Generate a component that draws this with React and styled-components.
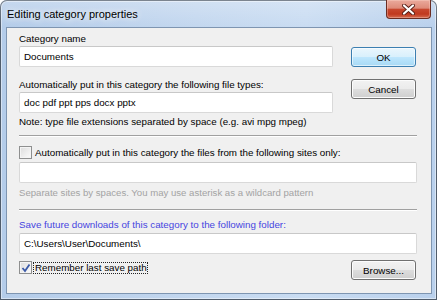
import React from 'react'
import styled, { createGlobalStyle } from 'styled-components'

const GlobalStyle = createGlobalStyle`
  html, body {
    margin: 0;
    padding: 0;
    background: #ffffff;
  }
  body {
    font-family: "Liberation Sans", Arial, sans-serif;
  }
`;

const Window = styled.div`
  width: 437px;
  height: 300px;
  box-sizing: border-box;
  display: flex;
  flex-direction: column;
  border-radius: 7px 7px 0 0;
  background: linear-gradient(90deg, #b4cce9 0%, #c3d7ef 45%, #c9dcf2 70%, #b9d0ec 100%);
  box-shadow: inset 0 0 0 1px #505c6b, inset 0 0 0 2px rgba(255, 255, 255, 0.45);
  overflow: hidden;
`;

const TitleBar = styled.div`
  height: 27px;
  flex: 0 0 27px;
  display: flex;
  align-items: flex-start;
  justify-content: space-between;
  padding-left: 7px;
  background: linear-gradient(180deg, rgba(255, 255, 255, 0.25) 0%, rgba(255, 255, 255, 0) 100%);
`;

const Title = styled.span`
  font-size: 11px;
  line-height: 28px;
  color: #000;
  text-shadow: 0 0 6px rgba(255, 255, 255, 0.95), 0 0 10px rgba(255, 255, 255, 0.7);
`;

const CloseButton = styled.div`
  width: 45px;
  height: 19px;
  box-sizing: border-box;
  margin-right: 6px;
  display: flex;
  align-items: center;
  justify-content: center;
  border: 1px solid #6a2c22;
  border-top: none;
  border-radius: 0 0 4px 4px;
  background: linear-gradient(180deg, #eaaa9c 0%, #de8b79 45%, #c7472e 52%, #c0391f 78%, #d56b50 100%);
  box-shadow: inset 0 0 0 1px rgba(255, 220, 210, 0.35);
`;

const Client = styled.div`
  flex: 1;
  margin: 0 5px 6px 6px;
  border: 1px solid #7e95b1;
  background: #f0f0f0;
  padding: 0 14px 0 12px;
  display: flex;
  flex-direction: column;
  font-size: 9.8px;
  color: #000;
`;

const TopSection = styled.div`
  display: flex;
  align-items: flex-start;
`;

const LeftColumn = styled.div`
  flex: 0 0 314px;
  display: flex;
  flex-direction: column;
`;

const ButtonColumn = styled.div`
  margin-left: auto;
  margin-right: 1px;
  padding-top: 19px;
  display: flex;
  flex-direction: column;
  gap: 12px;
`;

const Label = styled.div`
  line-height: 13px;
  margin-top: ${p => p.$top || 0}px;
  color: ${p => (p.$tone === 'muted' ? '#a3a3a3' : p.$tone === 'accent' ? '#4646e0' : '#000')};
  font-size: ${p => (p.$tone === 'muted' ? '9.6px' : 'inherit')};
  white-space: nowrap;
`;

const TextBox = styled.div`
  height: 21px;
  box-sizing: border-box;
  margin-top: ${p => p.$top || 0}px;
  padding: 0 4px;
  display: flex;
  align-items: center;
  background: #fff;
  border: 1px solid #d9d9d9;
  border-top-color: #c8c8c8;
  border-radius: 2px;
  white-space: nowrap;
`;

const Button = styled.div`
  width: 65px;
  height: 20px;
  box-sizing: border-box;
  display: flex;
  align-items: center;
  justify-content: center;
  border: 1px solid ${p => (p.$primary ? '#3c7fb1' : '#707070')};
  border-radius: 3px;
  background: ${p =>
    p.$primary
      ? 'linear-gradient(180deg, #eaf6fd 0%, #d9f0fc 48%, #bee6fd 52%, #a7d9f5 100%)'
      : 'linear-gradient(180deg, #f2f2f2 0%, #ebebeb 48%, #dddddd 52%, #cfcfcf 100%)'};
  box-shadow: inset 0 0 0 1px ${p => (p.$primary ? 'rgba(255,255,255,0.6)' : '#fcfcfc')};
  color: #000;
`;

const Separator = styled.div`
  margin-top: ${p => p.$top || 0}px;
  height: 0;
  border-top: 1px solid #a0a0a0;
  border-bottom: 1px solid #ffffff;
`;

const CheckRow = styled.div`
  display: flex;
  align-items: center;
  margin-top: ${p => p.$top || 0}px;
  line-height: 11px;
`;

const Box = styled.span`
  width: 13px;
  height: 13px;
  box-sizing: border-box;
  flex: 0 0 13px;
  display: flex;
  align-items: center;
  justify-content: center;
  border: 1px solid #8e8f8f;
  background: linear-gradient(135deg, #dcdcdc 0%, #f2f2f2 70%, #fbfbfb 100%);
  box-shadow: inset 0 0 0 1px #f4f4f4;
`;

const CheckText = styled.span`
  margin-left: 1px;
  padding: 0 0 0 1px;
  border: 1px ${p => (p.$focused ? 'dotted #222' : 'solid transparent')};
  line-height: 10px;
  white-space: nowrap;
`;

const BottomRow = styled.div`
  display: flex;
  align-items: flex-start;
  justify-content: space-between;
  margin-top: 6px;
  padding-right: 1px;
`;

const CloseGlyph = () => (
  <svg width="13" height="11" viewBox="0 0 13 11">
    <path d="M2 1.5 L11 9.5 M11 1.5 L2 9.5" stroke="#5a2018" strokeWidth="4" strokeLinecap="round" />
    <path d="M2 1.5 L11 9.5 M11 1.5 L2 9.5" stroke="#ffffff" strokeWidth="2.2" strokeLinecap="round" />
  </svg>
);

const CheckMark = () => (
  <svg width="10" height="10" viewBox="0 0 10 10">
    <path d="M1.5 5 L4 8 L8.5 1.5" fill="none" stroke="#3b5aa8" strokeWidth="1.8" />
  </svg>
);

const CheckBox = ({ checked, focused, children }) => (
  <>
    <Box>{checked && <CheckMark />}</Box>
    <CheckText $focused={focused}>{children}</CheckText>
  </>
);

export default function App() {
  return (
    <>
      <GlobalStyle />
      <Window>
        <TitleBar>
          <Title>Editing category properties</Title>
          <CloseButton><CloseGlyph /></CloseButton>
        </TitleBar>
        <Client>
          <TopSection>
            <LeftColumn>
              <Label $top={4}>Category name</Label>
              <TextBox $top={1}>Documents</TextBox>
              <Label $top={11}>Automatically put in this category the following file types:</Label>
              <TextBox $top={1}>doc pdf ppt pps docx pptx</TextBox>
              <Label $top={2}>Note: type file extensions separated by space (e.g. avi mpg mpeg)</Label>
            </LeftColumn>
            <ButtonColumn>
              <Button $primary>OK</Button>
              <Button>Cancel</Button>
            </ButtonColumn>
          </TopSection>

          <Separator $top={7} />

          <CheckRow $top={9}>
            <CheckBox>Automatically put in this category the files from the following sites only:</CheckBox>
          </CheckRow>
          <TextBox $top={3} />
          <Label $tone="muted" $top={3}>Separate sites by spaces. You may use asterisk as a wildcard pattern</Label>

          <Separator $top={10} />

          <Label $tone="accent" $top={7}>Save future downloads of this category to the following folder:</Label>
          <TextBox $top={2}>C:\Users\User\Documents\</TextBox>
          <BottomRow>
            <CheckRow $top={1}>
              <CheckBox checked focused>Remember last save path</CheckBox>
            </CheckRow>
            <Button>Browse...</Button>
          </BottomRow>
        </Client>
      </Window>
    </>
  );
}
